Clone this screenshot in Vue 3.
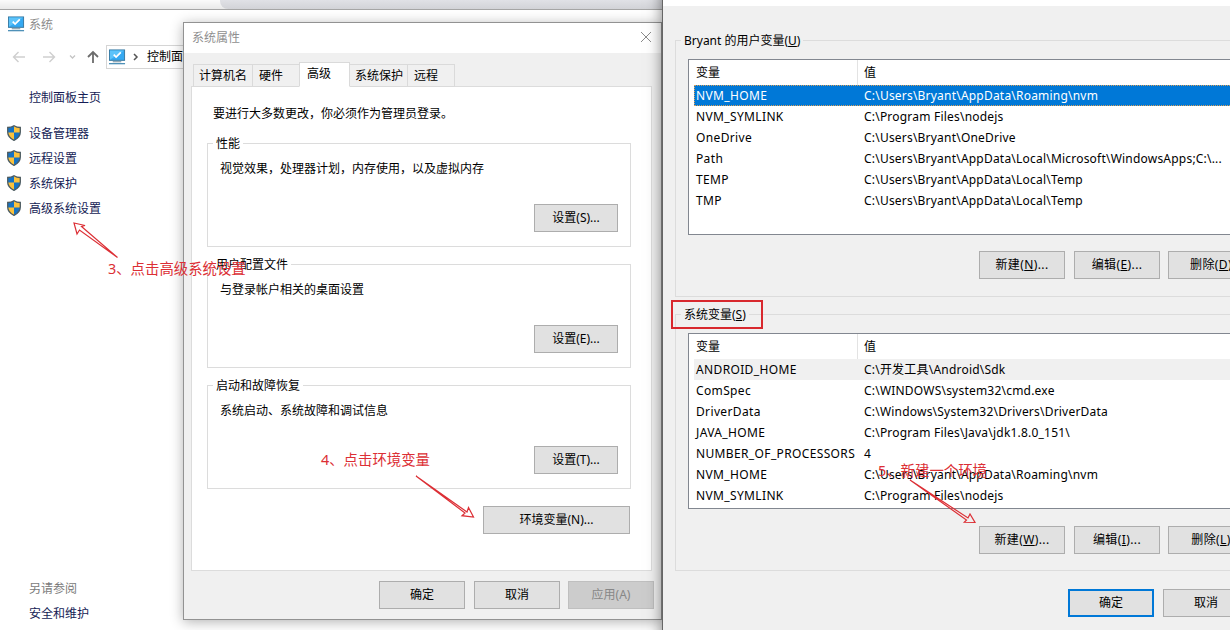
<template>
  <div class="desktop">
    <!-- 最上方的瀏覽器邊緣 -->
    <div class="top-strip"><div class="strip-tab"></div></div>

    <!-- 系統視窗 -->
    <div class="system-window">
      <div class="system-title">
        <svg class="monitor" viewBox="0 0 18 17">
          <rect x="0.5" y="0.5" width="16" height="11" fill="#35a9f2" stroke="#36779f" />
          <path d="M1 11V1h15z" fill="#5cc3fa" />
          <path d="M5 5.5l2.5 2.5 5-5" fill="none" stroke="#fff" stroke-width="1.8" />
          <path d="M4 13h9" stroke="#6b8799" />
          <path d="M0 15h17" stroke="#4f91b8" stroke-width="1.4" />
        </svg>
        <span>系统</span>
      </div>
      <div class="nav-row">
        <svg class="nav-arrows" viewBox="0 0 106 24">
          <path d="M25 12H13.5M18.5 7l-5 5 5 5" stroke="#cfcfcf" stroke-width="1.4" />
          <path d="M43 12h11.5M49.5 7l5 5-5 5" stroke="#cfcfcf" stroke-width="1.4" />
          <path d="M70 10.5l2.5 2.5 2.5-2.5" stroke="#c4c4c4" stroke-width="1.3" />
          <path d="M93 18V7M88 12l5-5 5 5" stroke="#6c6c6c" stroke-width="1.8" />
        </svg>
        <div class="address">
          <svg class="monitor" viewBox="0 0 18 17">
            <rect x="0.5" y="0.5" width="16" height="11" fill="#35a9f2" stroke="#36779f" />
            <path d="M1 11V1h15z" fill="#5cc3fa" />
            <path d="M5 5.5l2.5 2.5 5-5" fill="none" stroke="#fff" stroke-width="1.8" />
            <path d="M4 13h9" stroke="#6b8799" />
            <path d="M0 15h17" stroke="#4f91b8" stroke-width="1.4" />
          </svg>
          <svg class="chevron" viewBox="0 0 6 8"><path d="M1 1l3 3-3 3" /></svg>
          <span>控制面板</span>
        </div>
      </div>
      <div class="side-home">控制面板主页</div>
      <div class="side-links">
        <div v-for="link in links" :key="link" class="side-link">
          <svg class="shield" viewBox="0 0 14 16">
            <path d="M7 .7C5 2 3 2.5.7 2.5V7c0 4 2.5 6.5 6.3 8.3C10.8 13.5 13.3 11 13.3 7V2.5C11 2.5 9 2 7 .7z" fill="#1673c4" />
            <path d="M7 .7C9 2 11 2.5 13.3 2.5V7.5H7zM.8 7.5H7v7.8C3.5 13.7 1 11.3.8 7.5z" fill="#fcc23c" />
            <path d="M7 .7C5 2 3 2.5.7 2.5V7c0 4 2.5 6.5 6.3 8.3C10.8 13.5 13.3 11 13.3 7V2.5C11 2.5 9 2 7 .7z" fill="none" stroke="#4d5c62" stroke-width="1.3" />
          </svg>
          <span>{{ link }}</span>
        </div>
      </div>
      <div class="see-also">
        <p class="see-title">另请参阅</p>
        <p>安全和维护</p>
      </div>
    </div>

    <!-- 系統屬性對話框 -->
    <div class="props-dialog">
      <div class="props-title">
        <span>系统属性</span>
        <svg class="close" viewBox="0 0 12 12"><path d="M1 1l10 10M11 1L1 11" /></svg>
      </div>
      <div class="tabs">
        <div
          v-for="tab in tabs"
          :key="tab.name"
          class="tab"
          :class="{ active: tab.name === activeTab }"
          :style="{ width: tab.width + 'px' }"
        >{{ tab.name }}</div>
      </div>
      <div class="panel">
        <p class="hint">要进行大多数更改，你必须作为管理员登录。</p>
        <div v-for="g in groups" :key="g.title" class="group">
          <span class="legend">{{ g.title }}</span>
          <p class="group-text">{{ g.text }}</p>
          <button class="btn">设置({{ g.key }})...</button>
        </div>
        <button class="btn env-btn">环境变量(N)...</button>
      </div>
      <div class="props-footer">
        <button class="btn">确定</button>
        <button class="btn">取消</button>
        <button class="btn disabled">应用(A)</button>
      </div>
    </div>

    <!-- 環境變數對話框 -->
    <div class="env-dialog">
      <div class="env-title"></div>
      <div v-for="s in sections" :key="s.title" class="env-group">
        <span class="legend">{{ s.title }}(<u>{{ s.key }}</u>)</span>
        <div class="list">
          <div class="list-row list-head"><span class="col-name">变量</span><span class="col-value">值</span></div>
          <div v-for="row in s.rows" :key="row[0]" class="list-row" :class="row[2]">
            <span class="col-name">{{ row[0] }}</span><span class="col-value">{{ row[1] }}</span>
          </div>
        </div>
        <div class="env-buttons">
          <button class="btn">新建(<u>{{ s.keys[0] }}</u>)...</button>
          <button class="btn">编辑(<u>{{ s.keys[1] }}</u>)...</button>
          <button class="btn">删除(<u>{{ s.keys[2] }}</u>)</button>
        </div>
      </div>
      <div class="env-footer">
        <button class="btn primary">确定</button>
        <button class="btn">取消</button>
      </div>
    </div>

    <!-- 紅色標註 -->
    <div class="mark mark-3">3、点击高级系统设置</div>
    <div class="mark mark-4">4、点击环境变量</div>
    <div class="mark mark-5">5、新建一个环境</div>
    <div class="mark-box"></div>
    <svg class="arrows" viewBox="0 0 1230 630">
      <path d="M117.5 257.5L81.5 226.5L85 225.5L74 223L77 234L79.5 230z" />
      <path d="M416 476L467 512L468.5 507.5L473.5 517L462 515.7L465 513z" />
      <path d="M910 480L968 518L970 514L975 522.5L964.3 522.3L966.5 520z" />
    </svg>
  </div>
</template>

<script setup>
import { ref } from 'vue'

const activeTab = ref('高级')

const links = ['设备管理器', '远程设置', '系统保护', '高级系统设置']

const tabs = [
  { name: '计算机名', width: 60 },
  { name: '硬件', width: 47 },
  { name: '高级', width: 51 },
  { name: '系统保护', width: 58 },
  { name: '远程', width: 47 }
]

const groups = [
  { title: '性能', text: '视觉效果，处理器计划，内存使用，以及虚拟内存', key: 'S' },
  { title: '用户配置文件', text: '与登录帐户相关的桌面设置', key: 'E' },
  { title: '启动和故障恢复', text: '系统启动、系统故障和调试信息', key: 'T' }
]

// 每列：名稱、值、樣式
const sections = [
  {
    title: 'Bryant 的用户变量',
    key: 'U',
    keys: ['N', 'E', 'D'],
    rows: [
      ['NVM_HOME', 'C:\\Users\\Bryant\\AppData\\Roaming\\nvm', 'selected'],
      ['NVM_SYMLINK', 'C:\\Program Files\\nodejs'],
      ['OneDrive', 'C:\\Users\\Bryant\\OneDrive'],
      ['Path', 'C:\\Users\\Bryant\\AppData\\Local\\Microsoft\\WindowsApps;C:\\...'],
      ['TEMP', 'C:\\Users\\Bryant\\AppData\\Local\\Temp'],
      ['TMP', 'C:\\Users\\Bryant\\AppData\\Local\\Temp']
    ]
  },
  {
    title: '系统变量',
    key: 'S',
    keys: ['W', 'I', 'L'],
    rows: [
      ['ANDROID_HOME', 'C:\\开发工具\\Android\\Sdk', 'inactive'],
      ['ComSpec', 'C:\\WINDOWS\\system32\\cmd.exe'],
      ['DriverData', 'C:\\Windows\\System32\\Drivers\\DriverData'],
      ['JAVA_HOME', 'C:\\Program Files\\Java\\jdk1.8.0_151\\'],
      ['NUMBER_OF_PROCESSORS', '4'],
      ['NVM_HOME', 'C:\\Users\\Bryant\\AppData\\Roaming\\nvm'],
      ['NVM_SYMLINK', 'C:\\Program Files\\nodejs']
    ]
  }
]
</script>

<style>
body {
  overflow: hidden;
}
</style>

<style scoped>
.desktop {
  position: relative;
  width: 1230px;
  height: 630px;
  overflow: hidden;
  background: #fff;
  color: #000;
  font-family: 'Noto Sans', 'Noto Sans CJK SC', sans-serif;
  font-size: 12px;
  line-height: 18px;
}

.desktop * {
  box-sizing: border-box;
}

p {
  margin: 0;
}

.top-strip {
  height: 10px;
  background: linear-gradient(#fbfbfb, #e9e9e9);
  border-bottom: 1px solid #a5a5a5;
}

.strip-tab {
  height: 9px;
  margin-left: 220px;
  border-bottom-left-radius: 8px;
  background: linear-gradient(#e0e1e6, #d2d3d7);
}

/* 系統視窗 */
.system-window {
  width: 663px;
  height: 620px;
}

.system-title {
  display: flex;
  gap: 4px;
  height: 30px;
  padding: 6px 0 0 8px;
  color: #8c8c8c;
}

.monitor {
  flex: none;
  width: 17px;
  height: 17px;
}

.nav-row {
  display: flex;
  height: 24px;
  margin-top: 5px;
}

.nav-arrows {
  width: 106px;
  height: 24px;
  fill: none;
}

.address {
  display: flex;
  align-items: center;
  flex: 1;
  padding-left: 2px;
  border: 1px solid #d5d5d5;
}

.chevron {
  width: 6px;
  height: 8px;
  margin: 0 8px 0 7px;
  fill: none;
  stroke: #555;
  stroke-width: 1.5;
}

.side-home {
  margin: 20px 0 0 29px;
  color: #151c55;
}

.side-links {
  padding: 14px 0 0 7px;
}

.side-link {
  display: flex;
  align-items: center;
  gap: 8px;
  height: 25px;
  color: #151c55;
}

.shield {
  width: 14px;
  height: 16px;
  margin-top: -1px;
}

.see-also {
  margin: 355px 0 0 29px;
  line-height: 25px;
  color: #151c55;
}

.see-title {
  color: #7a7a7a;
}

/* 系統屬性 */
.props-dialog {
  position: absolute;
  left: 183px;
  top: 22px;
  width: 479px;
  height: 598px;
  background: #f0f0f0;
  border: 1px solid #929292;
  box-shadow: 0 2px 12px rgba(0, 0, 0, 0.3);
}

.props-title {
  display: flex;
  justify-content: space-between;
  height: 30px;
  padding: 6px 9px 0 8px;
  background: #fff;
  color: #8f8f8f;
}

.close {
  width: 12px;
  height: 12px;
  margin-top: 2px;
  stroke: #8a8a8a;
}

.tabs {
  display: flex;
  align-items: flex-end;
  height: 34px;
  margin: 0 0 -1px 9px;
  position: relative;
}

.tab {
  height: 23px;
  padding: 2px 0 0 5px;
  border: 1px solid #dadada;
  border-left: 0;
  white-space: nowrap;
}

.tab:first-child {
  border-left: 1px solid #dadada;
}

.tab:nth-child(2),
.tab:last-child {
  padding-left: 6px;
}

.tab.active {
  height: 25px;
  margin-left: -1px;
  padding-left: 7px;
  border-left: 1px solid #dadada;
  border-bottom-color: #fff;
  background: #fff;
}

.panel {
  width: 461px;
  height: 485px;
  margin-left: 7px;
  padding: 18px 20px 0 15px;
  background: #fff;
  border: 1px solid #dcdcdc;
}

.hint {
  padding-left: 6px;
}

.group {
  display: flex;
  flex-direction: column;
  height: 104px;
  margin-top: 17px;
  padding: 0 12px 0 5px;
  border: 1px solid #dcdcdc;
}

.hint + .group {
  margin-top: 20px;
}

.legend {
  align-self: flex-start;
  height: 18px;
  margin-top: -9px;
  padding: 0 3px;
  background: #fff;
}

.group-text {
  margin-top: 7px;
  padding-left: 7px;
}

.btn {
  flex: none;
  width: 86px;
  height: 28px;
  padding: 0;
  border: 1px solid #adadad;
  background: #e1e1e1;
  color: #000;
  font-family: inherit;
  font-size: 12px;
  line-height: 18px;
}

.group .btn {
  width: 84px;
  align-self: flex-end;
  margin-top: 26px;
}

.env-btn {
  display: block;
  width: 147px;
  margin: 17px 1px 0 auto;
}

.props-footer {
  display: flex;
  justify-content: flex-end;
  gap: 9px;
  padding: 10px 7px 0 0;
}

.props-footer .btn:last-child,
.env-buttons .btn:last-child {
  margin-left: -1px;
}

.btn.disabled {
  border-color: #bfbfbf;
  background: #ccc;
  color: #878787;
}

/* 環境變數 */
.env-dialog {
  position: absolute;
  left: 662px;
  top: -24px;
  width: 640px;
  height: 680px;
  background: #f0f0f0;
  border-left: 1px solid #666;
  box-shadow: 0 2px 14px rgba(0, 0, 0, 0.5);
}

.env-title {
  height: 30px;
  background: #fff;
}

.env-group {
  display: flex;
  flex-direction: column;
  height: 257px;
  margin: 34px 0 0 12px;
  padding: 0 0 0 5px;
  border: 1px solid #dcdcdc;
}

.env-group + .env-group {
  margin-top: 17px;
}

.env-group .legend {
  background: #f0f0f0;
}

.list {
  height: 176px;
  margin: 9px 0 0 7px;
  padding-left: 5px;
  border: 1px solid #828790;
  background: #fff;
}

.list-row {
  display: flex;
  height: 21px;
  line-height: 22px;
  white-space: pre;
}

.list-head {
  height: 25px;
  line-height: 26px;
}

.col-name {
  width: 164px;
  padding-left: 2px;
  letter-spacing: 0.36px;
}

.list-head .col-name {
  border-right: 1px solid #e3e3e3;
  letter-spacing: 0;
}

.col-value {
  padding-left: 6px;
  letter-spacing: 0.21px;
}

.selected {
  background: #0078d7;
  color: #fff;
  outline: 1px dotted #d9a05a;
  outline-offset: -1px;
}

.inactive {
  background: #f0f0f0;
}

.env-buttons {
  display: flex;
  gap: 9px;
  margin: 16px 0 0 298px;
}

.env-buttons .btn {
  letter-spacing: 0.4px;
}

.env-group + .env-group .env-buttons {
  margin-top: 17px;
}

.env-footer {
  display: flex;
  gap: 9px;
  margin: 18px 0 0 405px;
}

.btn.primary {
  border: 2px solid #0078d7;
}

/* 標註文字與箭頭 */
.mark {
  position: absolute;
  color: #dc2f35;
  font-size: 14.4px;
  line-height: 20px;
  white-space: nowrap;
}

.mark-3 {
  left: 108px;
  top: 259px;
}

.mark-4 {
  left: 321px;
  top: 450px;
}

.mark-5 {
  left: 878px;
  top: 461px;
}

.mark-box {
  position: absolute;
  left: 671px;
  top: 300px;
  width: 92px;
  height: 29px;
  border: 2px solid #d8282e;
}

.arrows {
  position: absolute;
  left: 0;
  top: 0;
  width: 1230px;
  height: 630px;
  fill: none;
  stroke: #dc2f35;
  stroke-width: 1.2;
}
</style>
